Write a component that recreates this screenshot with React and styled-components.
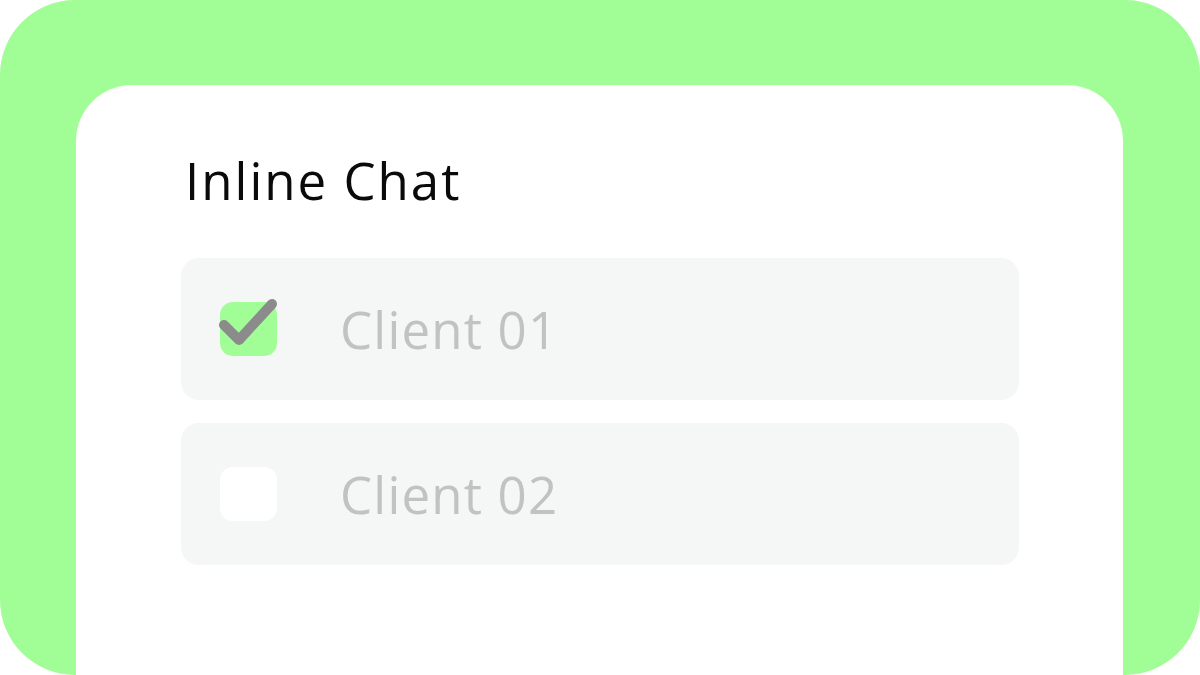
import React from "react";
import styled, { createGlobalStyle } from "styled-components";

const Global = createGlobalStyle`
  html, body { margin: 0; padding: 0; background: #ffffff; }
  body { font-family: "Open Sans", "Noto Sans", sans-serif; overflow: hidden; }
`;

const Frame = styled.div`
  width: 1200px;
  height: 675px;
  box-sizing: border-box;
  background: #a1fe97;
  border-radius: 75px;
  padding: 85px 77px 0 76px;
  overflow: hidden;
  display: flex;
`;

const Card = styled.section`
  flex: 1;
  background: #ffffff;
  border-radius: 56px 56px 0 0;
  padding: 69px 0 0 105px;
  display: flex;
  flex-direction: column;
`;

const Title = styled.h1`
  margin: 0 0 52px 4px;
  font-family: "Open Sans", "Noto Sans", sans-serif;
  font-weight: 400;
  font-size: 51px;
  line-height: 52px;
  color: #0a0a0a;
  letter-spacing: 2px;
`;

const List = styled.div`
  display: flex;
  flex-direction: column;
  gap: 23px;
  width: 838px;
`;

const Row = styled.div`
  height: 142px;
  box-sizing: border-box;
  background: #f5f6f6;
  border-radius: 18px;
  display: flex;
  align-items: center;
  padding-left: 39px;
  gap: 63px;
`;

const Box = styled.div`
  width: 57px;
  height: 54px;
  border-radius: 13px;
  background: ${(p) => (p.$checked ? "#a1fe97" : "#ffffff")};
  position: relative;
  flex: none;
`;

const Mark = styled.svg`
  position: absolute;
  left: -6px;
  top: -6px;
  overflow: visible;
`;

const Label = styled.span`
  font-family: "Open Sans", "Noto Sans", sans-serif;
  font-size: 51px;
  line-height: 52px;
  color: #c2c2c2;
  letter-spacing: 1.2px;
`;

function Checkbox({ checked }) {
  return (
    <Box $checked={checked}>
      {checked && (
        <Mark width="70" height="66" viewBox="0 0 70 66">
          <path
            d="M10 29 L25 44 L58 8"
            fill="none"
            stroke="#8b8b8b"
            strokeWidth="10"
            strokeLinecap="round"
            strokeLinejoin="round"
          />
        </Mark>
      )}
    </Box>
  );
}

const clients = [
  { name: "Client 01", checked: true },
  { name: "Client 02", checked: false },
];

export default function App() {
  return (
    <>
      <Global />
      <Frame>
        <Card>
          <Title>Inline Chat</Title>
          <List>
            {clients.map((c) => (
              <Row key={c.name}>
                <Checkbox checked={c.checked} />
                <Label>{c.name}</Label>
              </Row>
            ))}
          </List>
        </Card>
      </Frame>
    </>
  );
}
